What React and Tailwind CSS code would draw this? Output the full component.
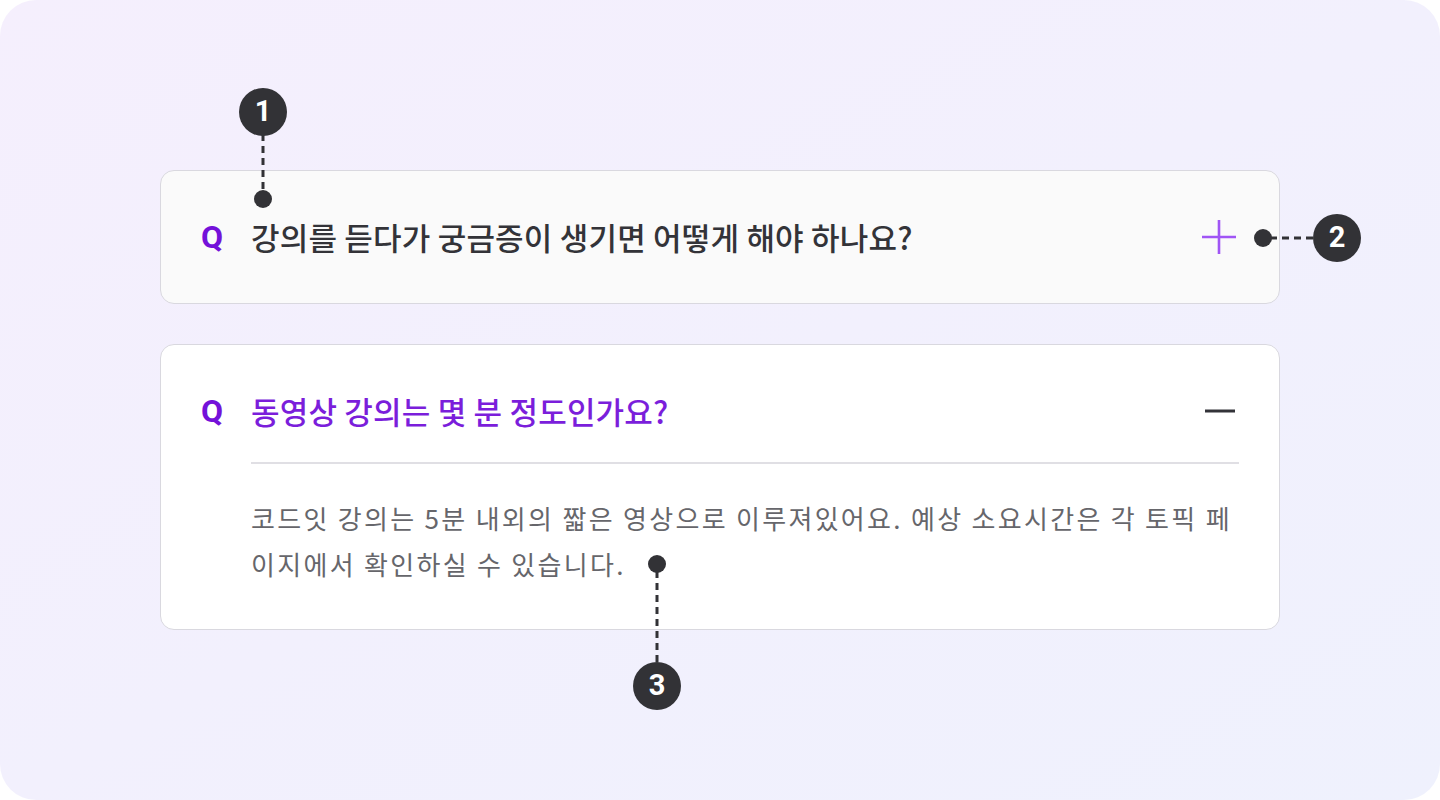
import React from "react"

const KR = { fontFamily: '"Noto Sans CJK KR", "Noto Sans", sans-serif' }
const NUM = { fontFamily: 'Roboto, "Liberation Sans", sans-serif' }

function Marker({ n }) {
  return (
    <div
      className="w-12 h-12 rounded-full bg-[#323236] text-white flex items-center justify-center text-[29px] font-bold shrink-0"
      style={NUM}
    >
      {n}
    </div>
  )
}

function Dot() {
  return <div className="w-[18px] h-[18px] rounded-full bg-[#323236] shrink-0" />
}

function VLine({ h }) {
  return (
    <svg width="4" height={h} className="shrink-0 -my-[2px]">
      <line x1="2" y1="0" x2="2" y2={h} stroke="#323236" strokeWidth="3" strokeDasharray="7 5" />
    </svg>
  )
}

function HLine({ w }) {
  return (
    <svg width={w} height="4" className="shrink-0 -mx-[2px]">
      <line x1="0" y1="2" x2={w} y2="2" stroke="#323236" strokeWidth="3" strokeDasharray="7 5" />
    </svg>
  )
}

function PlusIcon() {
  return (
    <svg width="36" height="36" viewBox="0 0 36 36">
      <path d="M1 18h34M18 1v34" stroke="#a055f5" strokeWidth="2.6" />
    </svg>
  )
}

function MinusIcon() {
  return (
    <svg width="32" height="36" viewBox="0 0 32 36">
      <path d="M1 18h30" stroke="#333338" strokeWidth="3" />
    </svg>
  )
}

function App() {
  return (
    <div className="w-[1440px] h-[800px] bg-white">
      <div className="w-full h-full rounded-[36px] bg-gradient-to-br from-[#f5effd] to-[#eff1fd] pt-[170px] px-[160px] flex flex-col gap-10">
        {/* closed item */}
        <div className="relative rounded-[14px] border border-[#d9d8df] bg-[#fafafa] pl-10 pr-[42px] py-[39px]">
          <div className="flex items-center h-[54px]">
            <span className="w-[50px] text-[#7411d9] text-[32px] font-bold" style={NUM}>
              Q
            </span>
            <span className="flex-1 text-[31px] font-medium text-[#333338] tracking-[0.2px]" style={KR}>
              강의를 듣다가 궁금증이 생기면 어떻게 해야 하나요?
            </span>
            <PlusIcon />
          </div>

          <div className="absolute left-[78px] top-[-83px] flex flex-col items-center">
            <Marker n="1" />
            <VLine h={58} />
            <Dot />
          </div>

          <div className="absolute left-[1093px] top-[43px] flex items-center">
            <Dot />
            <HLine w={45} />
            <Marker n="2" />
          </div>
        </div>

        {/* open item */}
        <div className="relative rounded-[14px] border border-[#d9d8df] bg-white pl-10 pr-10 pt-[39px] pb-[42px]">
          <div className="flex items-center h-[54px] pr-[3px]">
            <span className="w-[50px] text-[#7411d9] text-[32px] font-bold" style={NUM}>
              Q
            </span>
            <span className="flex-1 text-[31px] font-medium text-[#7b1edb] tracking-[0.2px]" style={KR}>
              동영상 강의는 몇 분 정도인가요?
            </span>
            <MinusIcon />
          </div>
          <div className="ml-[50px] mt-6 h-[2px] bg-[#e0dfe4]" />
          <p
            className="ml-[50px] pt-[31px] text-[26px] leading-[46px] text-[#66666b] tracking-[2.3px]"
            style={KR}
          >
            코드잇 강의는 5분 내외의 짧은 영상으로 이루져있어요. 예상 소요시간은 각 토픽 페이지에서 확인하실 수 있습니다.
          </p>

          <div className="absolute left-[472px] top-[210px] flex flex-col items-center">
            <Dot />
            <VLine h={93} />
            <Marker n="3" />
          </div>
        </div>
      </div>
    </div>
  )
}

export default App
